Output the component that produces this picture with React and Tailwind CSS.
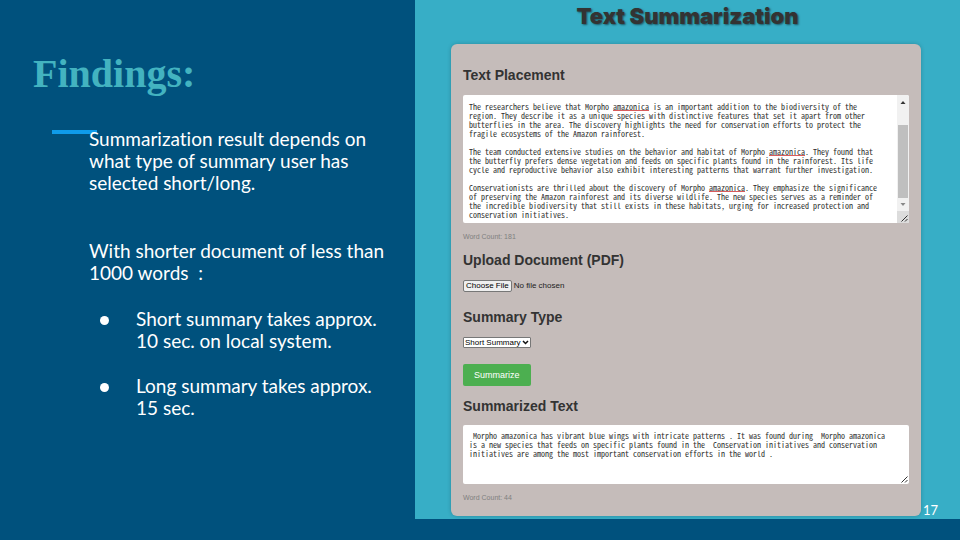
const placementText = `The researchers believe that Morpho amazonica is an important addition to the biodiversity of the
region. They describe it as a unique species with distinctive features that set it apart from other
butterflies in the area. The discovery highlights the need for conservation efforts to protect the
fragile ecosystems of the Amazon rainforest.

The team conducted extensive studies on the behavior and habitat of Morpho amazonica. They found that
the butterfly prefers dense vegetation and feeds on specific plants found in the rainforest. Its life
cycle and reproductive behavior also exhibit interesting patterns that warrant further investigation.

Conservationists are thrilled about the discovery of Morpho amazonica. They emphasize the significance
of preserving the Amazon rainforest and its diverse wildlife. The new species serves as a reminder of
the incredible biodiversity that still exists in these habitats, urging for increased protection and
conservation initiatives.`;

const summaryText = ` Morpho amazonica has vibrant blue wings with intricate patterns . It was found during  Morpho amazonica
is a new species that feeds on specific plants found in the  Conservation initiatives and conservation
initiatives are among the most important conservation efforts in the world .`;

const monoText =
  "block resize-none overflow-hidden whitespace-pre bg-transparent pl-[6px] font-['Noto_Sans_Mono_CJK_SC','Liberation_Mono',monospace] text-[8px] leading-[9px] text-[#2e2e2e] outline-none";

function Heading({ children, className = "", ...rest }) {
  return (
    <h2 className={`text-[14px] font-bold leading-4 text-[#333] ${className}`} {...rest}>
      {children}
    </h2>
  );
}

function ResizeGrip() {
  return (
    <svg className="block h-[12px] w-[12px]" viewBox="0 0 12 12" fill="none" stroke="#333" strokeWidth="1" aria-hidden="true">
      <path d="M4.500 10.500 10.500 4.500M8 10.500 10.500 8" />
    </svg>
  );
}

function ScrollBar() {
  return (
    <div className="flex w-[12px] shrink-0 flex-col bg-[#f1f1f1]" aria-hidden="true">
      <svg className="block h-[30px] w-full" viewBox="0 0 12 30">
        <path d="M3.500 9 6 6l2.500 3z" fill="#333" />
      </svg>
      <div className="mx-px grow bg-[#bfbfbf]" />
      <svg className="block h-[13px] w-full" viewBox="0 0 12 13">
        <path d="M3.500 5h5L6 8z" fill="#888" />
      </svg>
      <div className="bg-[#dcdcdc]">
        <ResizeGrip />
      </div>
    </div>
  );
}

function Findings() {
  return (
    <section className="pl-[33px] pt-[50px]">
      <h1 className="font-['Liberation_Serif',serif] text-[40px] font-bold leading-[48px] text-[#43b3c0]">
        Findings:
      </h1>
      <div className="ml-[19px] mt-8 h-1 w-[45px] bg-[#0f9bea]" />
      <div className="-mt-[6px] ml-14 mr-6 font-['Lato',sans-serif] text-[19px] leading-[22px] text-white [font-variant-ligatures:none]">
        <p>
          Summarization result depends on
          <br />
          what type of summary user has
          <br />
          selected short/long.
        </p>
        <p className="mt-[46px]">
          With shorter document of less than
          <br />
          1000 words&nbsp; :
        </p>
        <ul className="mt-6 flex flex-col gap-[23px]">
          <li className="flex">
            <span className="mt-2 ml-[11px] mr-[27px] h-[9px] w-[9px] shrink-0 rounded-full bg-white" />
            <span>
              Short summary takes approx.
              <br />
              10 sec. on local system.
            </span>
          </li>
          <li className="flex">
            <span className="mt-2 ml-[11px] mr-[27px] h-[9px] w-[9px] shrink-0 rounded-full bg-white" />
            <span>
              Long summary takes approx.
              <br />
              15 sec.
            </span>
          </li>
        </ul>
      </div>
    </section>
  );
}

function Summarizer() {
  return (
    <section className="relative bg-[#37aec6] px-9 pb-[3px] pt-1 font-['Liberation_Sans',Arial,sans-serif]">
      <h1 className="text-center font-['Inter',sans-serif] text-[22px] font-black leading-6 text-[#333] [text-shadow:1px_1px_2px_rgba(0,0,0,0.5)]">
        Text Summarization
      </h1>
      <form
        className="mr-[3px] mt-4 rounded-md bg-[#c5bcba] px-3 pb-[14px] pt-[23px] shadow-[0_0_4px_rgba(0,0,0,0.2)]"
        onSubmit={(e) => e.preventDefault()}
      >
        <Heading>
          <label htmlFor="placement">Text Placement</label>
        </Heading>
        <div className="relative mt-3 flex h-32 overflow-hidden rounded-[2px] bg-white">
          <textarea
            id="placement"
            spellCheck={false}
            defaultValue={placementText}
            className={`${monoText} min-w-0 grow pt-[7px]`}
          />
          <div
            className="pointer-events-none absolute left-[6px] top-[7px] font-['Noto_Sans_Mono_CJK_SC','Liberation_Mono',monospace] text-[8px] leading-[9px]"
            aria-hidden="true"
          >
            <span className="absolute left-[36ch] top-[8px] h-px w-[9ch] bg-[#d85c5c]" />
            <span className="absolute left-[75ch] top-[53px] h-px w-[9ch] bg-[#d85c5c]" />
            <span className="absolute left-[60ch] top-[89px] h-px w-[9ch] bg-[#d85c5c]" />
          </div>
          <ScrollBar />
        </div>
        <p className="mt-[10px] text-[7px] leading-[8px] text-[#808080]">Word Count: 181</p>

        <Heading className="mt-[11px]">
          <label htmlFor="document">Upload Document (PDF)</label>
        </Heading>
        <input
          id="document"
          type="file"
          accept="application/pdf"
          className="mt-3 block h-[12px] text-[8px] leading-[10px] text-[#222] file:mr-[2px] file:h-[12px] file:rounded-[2px] file:border file:border-solid file:border-[#777] file:bg-[#efefef] file:px-[2px] file:text-[8px] file:leading-[10px] file:text-black"
        />

        <Heading className="mt-[17px]">
          <label htmlFor="type">Summary Type</label>
        </Heading>
        <div className="relative mt-3 w-[68px]">
          <select
            id="type"
            className="block h-[11px] w-full appearance-none rounded-[1px] border border-[#777] bg-white pl-px text-[8px] leading-[9px] text-black"
          >
            <option>Short Summary</option>
            <option>Long Summary</option>
          </select>
          <svg
            className="pointer-events-none absolute right-[2px] top-[3px] h-[5px] w-[7px]"
            viewBox="0 0 7 5"
            fill="none"
            stroke="#111"
            strokeWidth="1.500"
            aria-hidden="true"
          >
            <path d="M1 1l2.500 2.500L6 1" />
          </svg>
        </div>

        <button type="submit" className="mt-4 block h-[22px] rounded-[2px] bg-[#4caf50] px-[11px] text-[9px] leading-3 text-white">
          Summarize
        </button>

        <Heading className="mt-3">
          <label htmlFor="summary">Summarized Text</label>
        </Heading>
        <div className="relative mt-[11px] h-[59px] overflow-hidden rounded-[2px] bg-white">
          <textarea
            id="summary"
            readOnly
            spellCheck={false}
            defaultValue={summaryText}
            className={`${monoText} h-full w-full pt-[6px]`}
          />
          <div className="pointer-events-none absolute bottom-0 right-0">
            <ResizeGrip />
          </div>
        </div>
        <p className="mt-[10px] text-[7px] leading-[8px] text-[#808080]">Word Count: 44</p>
      </form>
      <span className="absolute bottom-px right-[22px] font-['Lato',sans-serif] text-[13px] leading-4 text-white">17</span>
    </section>
  );
}

export default function App() {
  return (
    <main className="min-h-screen bg-[#00517d]">
      <div className="grid grid-cols-[83fr_109fr]">
        <Findings />
        <Summarizer />
      </div>
    </main>
  );
}
